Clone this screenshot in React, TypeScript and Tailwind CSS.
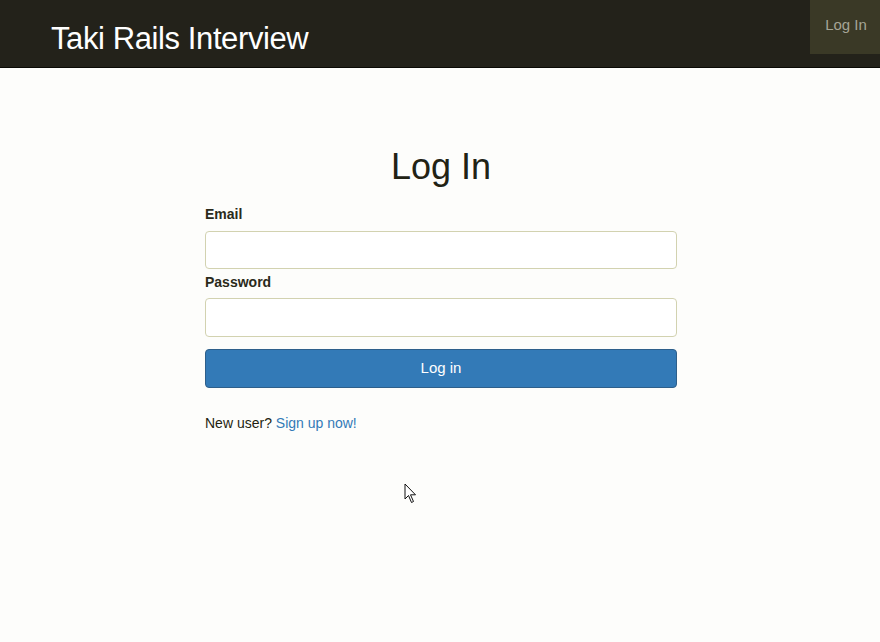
import React from "react";

function Cursor() {
  return (
    <svg
      className="absolute left-[404px] top-[483px]"
      width="14"
      height="22"
      viewBox="0 0 14 22"
    >
      <path
        d="M1 1 L1 16 L4.5 12.5 L7.5 19.5 L9.5 18.5 L6.5 11.8 L11.5 11.8 Z"
        fill="#fff"
        stroke="#111"
        strokeWidth="1"
        strokeLinejoin="round"
      />
    </svg>
  );
}

function App() {
  return (
    <div className="relative min-h-[642px] w-full bg-[#fdfdfb] font-['Liberation_Sans',Arial,sans-serif] text-[#2a2a1a]">
      <nav className="h-[68px] bg-[#23221a] border-b border-[#0a0a05] flex justify-between">
        <a className="pl-[51px] pt-[19px] text-[31px] leading-[40px] text-white tracking-[-0.4px]">
          Taki Rails Interview
        </a>
        <a className="h-[54px] w-[70px] bg-[#3a3926] text-[#a5a596] text-[15px] flex items-center justify-center pb-[3px] pl-[2px]">
          Log In
        </a>
      </nav>

      <div className="w-[472px] ml-[205px] pt-[76px]">
        <h1 className="text-center text-[36px] leading-[46px] text-[#222214] mb-[14px]">
          Log In
        </h1>
        <form className="flex flex-col">
          <label className="text-[14px] font-bold leading-[20px] mb-[7px]">
            Email
          </label>
          <input
            type="email"
            className="h-[38px] rounded-[4px] border border-[#d2d2b0] bg-white px-3"
          />
          <label className="text-[14px] font-bold leading-[20px] mt-[3px] mb-[6px]">
            Password
          </label>
          <input
            type="password"
            className="h-[39px] rounded-[4px] border border-[#d2d2b0] bg-white px-3"
          />
          <button
            type="button"
            className="mt-[12px] h-[39px] rounded-[4px] bg-[#337ab7] border border-[#2e5f8a] text-white text-[15px]"
          >
            Log in
          </button>
        </form>
        <p className="mt-[24px] text-[14px] leading-[22px] text-[#1f1f10]">
          New user? <a className="text-[#337ab7]">Sign up now!</a>
        </p>
      </div>
      <Cursor />
    </div>
  );
}

export default App;
